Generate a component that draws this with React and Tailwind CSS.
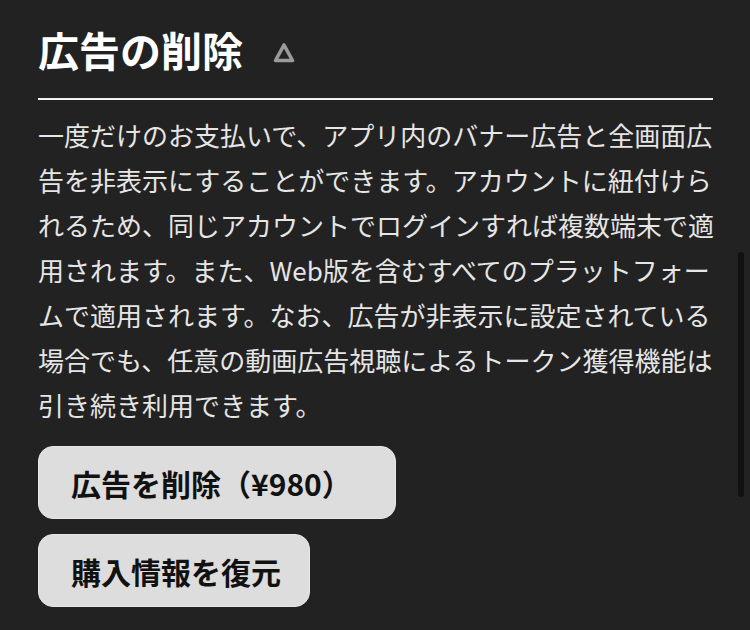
import React from "react";

export default function App() {
  const font = { fontFamily: '"Noto Sans CJK JP", "Noto Sans", sans-serif' };
  return (
    <div
      className="relative w-[750px] h-[630px] overflow-hidden bg-[#222222] text-white"
      style={font}
    >
      <div className="flex flex-col pl-[38px] w-[713px]">
        <div className="flex items-center pt-[27px] pb-[26px] border-b-2 border-[#f2f2f2]">
          <h1 className="text-[41px] leading-[45px] font-bold text-white">
            広告の削除
          </h1>
          <svg
            className="ml-[30px] mt-[6px]"
            width="22"
            height="21"
            viewBox="0 0 22 21"
          >
            <path
              d="M11 3 L19.5 18.5 L2.5 18.5 Z"
              fill="none"
              stroke="#9a9a9a"
              strokeWidth="3.6"
              strokeLinejoin="round"
            />
          </svg>
        </div>
        <p className="mt-[12px] w-[676px] text-[26px] leading-[45px] text-[#e6e6e6]">
          一度だけのお支払いで、アプリ内のバナー広告と全画面広告を非表示にすることができます。アカウントに紐付けられるため、同じアカウントでログインすれば複数端末で適用されます。また、Web版を含むすべてのプラットフォームで適用されます。なお、広告が非表示に設定されている場合でも、任意の動画広告視聴によるトークン獲得機能は引き続き利用できます。
        </p>
        <div className="flex flex-col items-start gap-[15px] mt-[19px]">
          <button className="w-[358px] h-[73px] pl-[32px] text-left rounded-[15px] bg-[#dddddd] border border-[#e8e8e8] text-[#111111] text-[30px] font-bold leading-none">
            広告を削除（¥980）
          </button>
          <button className="w-[272px] h-[73px] pl-[32px] text-left rounded-[15px] bg-[#dddddd] border border-[#e8e8e8] text-[#111111] text-[30px] font-bold leading-none">
            購入情報を復元
          </button>
        </div>
      </div>
      <div className="absolute left-[738px] top-[252px] w-[6px] h-[245px] rounded-full bg-[#111111]" />
    </div>
  );
}
